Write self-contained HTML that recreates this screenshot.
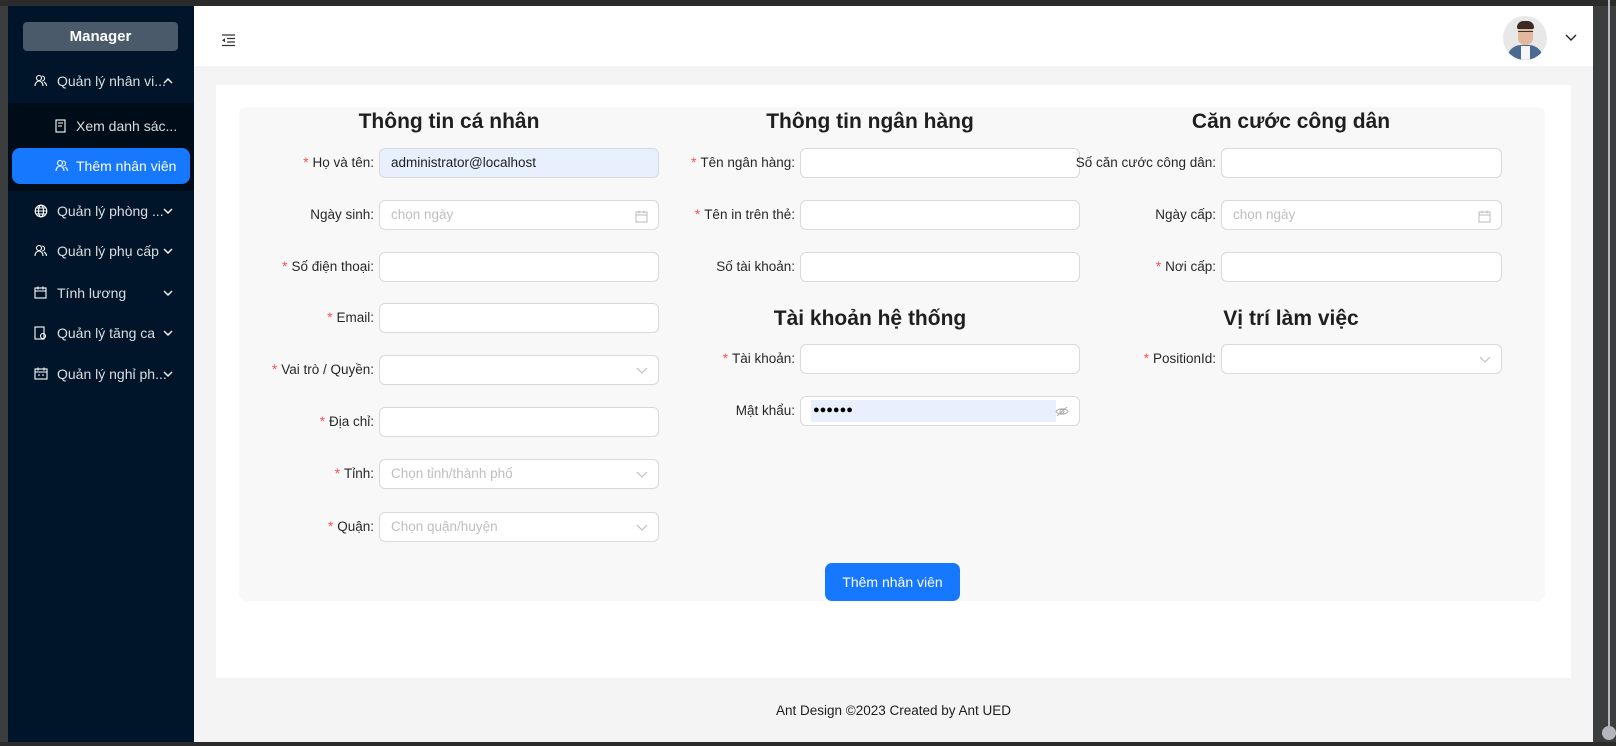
<!DOCTYPE html>
<html><head><meta charset="utf-8"><style>
*{box-sizing:border-box;margin:0;padding:0}
body{width:1616px;height:746px;background:#3c3d3f;position:relative;overflow:hidden;font-family:"Liberation Sans","DejaVu Sans",sans-serif;font-size:14px;color:rgba(0,0,0,.88)}
.a{position:absolute}
#side{left:8px;top:6px;width:186px;height:736px;background:#001529}
#main{left:194px;top:6px;width:1399px;height:736px;background:#f4f4f4}
.mi{position:absolute;left:0;width:186px;height:36px;color:rgba(255,255,255,.85);font-size:14px;line-height:36px}
.mi svg{position:absolute;left:26px;top:11px}
.mi .t{position:absolute;left:49px}
.mi svg.c{left:155px;top:15px}
.lab{position:absolute;text-align:right;font-size:13.5px;line-height:30px;color:rgba(0,0,0,.85)}
.lab b{color:#ff4d4f;font-weight:normal;margin-right:4px}
.in{position:absolute;height:30px;background:#fff;border:1px solid #d9d9d9;border-radius:6px;font-size:13.5px;line-height:28px;padding-left:11px;color:#bfbfbf}
.h{position:absolute;font-size:21px;font-weight:bold;color:rgba(0,0,0,.88);transform:translateX(-50%);white-space:nowrap}
.chev{position:absolute;right:10px;top:9px}
</style></head><body>
<div class="a" style="left:0;top:0;width:1616px;height:6px;background:#2b2b2b"></div>
<div class="a" id="side">
 <div class="a" style="left:15px;top:16px;width:155px;height:29px;background:#4a5a6b;border-radius:4px;color:#fff;font-weight:bold;font-size:15px;text-align:center;line-height:29px">Manager</div>
 <div class="mi" style="top:57px"><svg width="14" height="14" viewBox="0 0 14 14" fill="none" stroke="#fff" stroke-width="1.1"><circle cx="5" cy="4" r="2.5"/><path d="M1 12c0-3 2-5 4-5s4 2 4 5M8 2a2.5 2.5 0 010 5M10 8c1.5 1 2.5 2.5 2.5 4"/></svg><span class="t">Quản lý nhân vi...</span><svg class="c" width="10" height="6" viewBox="0 0 10 6" fill="none" stroke="#fff" stroke-width="1.4"><path d="M1 5l4-4 4 4"/></svg></div>
 <div class="a" style="left:0;top:97px;width:186px;height:88px;background:#000c17"></div>
 <div class="mi" style="top:102px"><svg style="left:47px" width="13" height="14" viewBox="0 0 13 14" fill="none" stroke="#fff" stroke-width="1.1"><rect x="1" y="1" width="9" height="12"/><path d="M3 4h5M3 7h4"/></svg><span class="t" style="left:68px">Xem danh sác...</span></div>
 <div class="a" style="left:4px;top:142px;width:178px;height:36px;background:#1677ff;border-radius:8px"></div>
 <div class="mi" style="top:142px;color:#fff"><svg style="left:47px" width="14" height="14" viewBox="0 0 14 14" fill="none" stroke="#fff" stroke-width="1.1"><circle cx="5" cy="4" r="2.5"/><path d="M1 12c0-3 2-5 4-5s4 2 4 5M8 2a2.5 2.5 0 010 5M10 8c1.5 1 2.5 2.5 2.5 4"/></svg><span class="t" style="left:68px">Thêm nhân viên</span></div>
 <div class="mi" style="top:187px"><svg width="14" height="14" viewBox="0 0 14 14" fill="none" stroke="#fff" stroke-width="1.1"><circle cx="7" cy="7" r="5.8"/><ellipse cx="7" cy="7" rx="2.5" ry="5.8"/><path d="M1.2 7h11.6M2 4h10M2 10h10"/></svg><span class="t">Quản lý phòng ...</span><svg class="c" width="10" height="6" viewBox="0 0 10 6" fill="none" stroke="#fff" stroke-width="1.4"><path d="M1 1l4 4 4-4"/></svg></div>
 <div class="mi" style="top:227px"><svg width="14" height="14" viewBox="0 0 14 14" fill="none" stroke="#fff" stroke-width="1.1"><circle cx="5" cy="4" r="2.5"/><path d="M1 12c0-3 2-5 4-5s4 2 4 5M8 2a2.5 2.5 0 010 5M10 8c1.5 1 2.5 2.5 2.5 4"/></svg><span class="t">Quản lý phụ cấp</span><svg class="c" width="10" height="6" viewBox="0 0 10 6" fill="none" stroke="#fff" stroke-width="1.4"><path d="M1 1l4 4 4-4"/></svg></div>
 <div class="mi" style="top:269px"><svg width="13" height="13" viewBox="0 0 13 13" fill="none" stroke="#fff" stroke-width="1.1"><rect x="1" y="2" width="11" height="10"/><path d="M1 5h11M4 0.5v3M9 0.5v3"/></svg><span class="t">Tính lương</span><svg class="c" width="10" height="6" viewBox="0 0 10 6" fill="none" stroke="#fff" stroke-width="1.4"><path d="M1 1l4 4 4-4"/></svg></div>
 <div class="mi" style="top:309px"><svg width="13" height="14" viewBox="0 0 13 14" fill="none" stroke="#fff" stroke-width="1.1"><rect x="1" y="1" width="9" height="12"/><circle cx="9" cy="10" r="2.5"/></svg><span class="t">Quản lý tăng ca</span><svg class="c" width="10" height="6" viewBox="0 0 10 6" fill="none" stroke="#fff" stroke-width="1.4"><path d="M1 1l4 4 4-4"/></svg></div>
 <div class="mi" style="top:350px"><svg width="14" height="13" viewBox="0 0 14 13" fill="none" stroke="#fff" stroke-width="1.1"><rect x="1" y="2" width="12" height="10"/><path d="M1 5h12M4 0.5v3M10 0.5v3M4 8h2M8 8h2"/></svg><span class="t">Quản lý nghỉ ph...</span><svg class="c" width="10" height="6" viewBox="0 0 10 6" fill="none" stroke="#fff" stroke-width="1.4"><path d="M1 1l4 4 4-4"/></svg></div>
</div>
<div class="a" id="main">
 <div class="a" style="left:0;top:0;width:1399px;height:60px;background:#fff"></div>
 <svg class="a" style="left:27px;top:28px" width="16" height="13" viewBox="0 0 16 13" stroke="#333" stroke-width="1.3"><path d="M1 1h13M6 4.5h8M6 8h8M1 11.5h13"/><path d="M1 6.3l3-2v4z" fill="#333" stroke="none"/></svg>
 <div class="a" style="left:1309px;top:10px;width:44px;height:44px;border-radius:50%;background:#e8e8e8;overflow:hidden">
  <div class="a" style="left:4px;top:29px;width:36px;height:20px;border-radius:14px 14px 0 0;background:#4a6a92"></div>
  <div class="a" style="left:18px;top:30px;width:9px;height:14px;background:#f5f5f5"></div>
  <div class="a" style="left:15px;top:9px;width:15px;height:20px;border-radius:7px;background:#e3b89e"></div>
  <div class="a" style="left:15px;top:15px;width:15px;height:3px;border-top:1.5px solid #333"></div>
  <div class="a" style="left:14px;top:5px;width:17px;height:8px;border-radius:8px 8px 2px 2px;background:#3a2a22"></div>
 </div>
 <svg class="a" style="left:1371px;top:28px" width="12" height="8" viewBox="0 0 12 8" fill="none" stroke="#222" stroke-width="1.4"><path d="M1 1l5 5 5-5"/></svg>
 <div class="a" style="left:22px;top:79px;width:1355px;height:593px;background:#fff"></div>
 <div class="a" style="left:45px;top:101px;width:1306px;height:494px;background:#f8f8f8;border-radius:8px"></div>
 <div class="a" style="left:0;top:697px;width:1399px;text-align:center;font-size:13.5px;color:rgba(0,0,0,.88)">Ant Design ©2023 Created by Ant UED</div>
 <div class="a" style="left:631px;top:557px;width:135px;height:38px;background:#1677ff;border-radius:7px;color:#fff;text-align:center;line-height:38px;font-size:14px">Thêm nhân viên</div>
</div>
<div class="a" style="left:0;top:742px;width:1616px;height:4px;background:#2b2b2b"></div>
<div class="a" style="left:1608px;top:0;width:2px;height:735px;background:#b3b6bc"></div>
<div class="a" style="left:1602px;top:726px;width:14px;height:14px;border-radius:50%;background:#b3b6bc"></div>

<div class="h" style="left:449px;top:110px">Thông tin cá nhân</div>
<div class="h" style="left:870px;top:110px">Thông tin ngân hàng</div>
<div class="h" style="left:1291px;top:110px">Căn cước công dân</div>
<div class="h" style="left:870px;top:307px">Tài khoản hệ thống</div>
<div class="h" style="left:1291px;top:307px">Vị trí làm việc</div>

<div class="lab" style="left:200px;width:174px;top:148px"><b>*</b>Họ và tên:</div>
<div class="in" style="left:379px;top:148px;width:280px;background:#e8f0fe;color:rgba(0,0,0,.88)">administrator@localhost</div>
<div class="lab" style="left:200px;width:174px;top:200px">Ngày sinh:</div>
<div class="in" style="left:379px;top:200px;width:280px">chọn ngày<svg class="chev" width="13" height="13" viewBox="0 0 13 13" fill="none" stroke="#bbb"><rect x="1" y="2" width="11" height="10"/><path d="M1 5h11M4 .5v3M9 .5v3"/></svg></div>
<div class="lab" style="left:200px;width:174px;top:252px"><b>*</b>Số điện thoại:</div>
<div class="in" style="left:379px;top:252px;width:280px"></div>
<div class="lab" style="left:200px;width:174px;top:303px"><b>*</b>Email:</div>
<div class="in" style="left:379px;top:303px;width:280px"></div>
<div class="lab" style="left:200px;width:174px;top:355px"><b>*</b>Vai trò / Quyền:</div>
<div class="in" style="left:379px;top:355px;width:280px"><svg class="chev" style="top:11px" width="12" height="7" viewBox="0 0 12 7" fill="none" stroke="#bbb"><path d="M1 1l5 5 5-5"/></svg></div>
<div class="lab" style="left:200px;width:174px;top:407px"><b>*</b>Địa chỉ:</div>
<div class="in" style="left:379px;top:407px;width:280px"></div>
<div class="lab" style="left:200px;width:174px;top:459px"><b>*</b>Tỉnh:</div>
<div class="in" style="left:379px;top:459px;width:280px">Chọn tỉnh/thành phố<svg class="chev" style="top:11px" width="12" height="7" viewBox="0 0 12 7" fill="none" stroke="#bbb"><path d="M1 1l5 5 5-5"/></svg></div>
<div class="lab" style="left:200px;width:174px;top:512px"><b>*</b>Quận:</div>
<div class="in" style="left:379px;top:512px;width:280px">Chọn quận/huyện<svg class="chev" style="top:11px" width="12" height="7" viewBox="0 0 12 7" fill="none" stroke="#bbb"><path d="M1 1l5 5 5-5"/></svg></div>

<div class="lab" style="left:640px;width:155px;top:148px"><b>*</b>Tên ngân hàng:</div>
<div class="in" style="left:800px;top:148px;width:280px"></div>
<div class="lab" style="left:640px;width:155px;top:200px"><b>*</b>Tên in trên thẻ:</div>
<div class="in" style="left:800px;top:200px;width:280px"></div>
<div class="lab" style="left:640px;width:155px;top:252px">Số tài khoản:</div>
<div class="in" style="left:800px;top:252px;width:280px"></div>
<div class="lab" style="left:640px;width:155px;top:344px"><b>*</b>Tài khoản:</div>
<div class="in" style="left:800px;top:344px;width:280px"></div>
<div class="lab" style="left:640px;width:155px;top:396px">Mật khẩu:</div>
<div class="in" style="left:800px;top:396px;width:280px;padding:3px 0 0 10px"><div style="width:245px;height:22px;background:#e8f0fe;color:#000;line-height:20px;font-size:11px;padding-left:2px">●●●●●●</div><svg class="chev" style="top:9px" width="14" height="11" viewBox="0 0 14 11" fill="none" stroke="#aaa"><path d="M1 5.5C3 2 11 2 13 5.5 11 9 3 9 1 5.5z"/><circle cx="7" cy="5.5" r="2"/><path d="M2 10L12 1"/></svg></div>

<div class="lab" style="left:1050px;width:166px;top:148px">Số căn cước công dân:</div>
<div class="in" style="left:1221px;top:148px;width:281px"></div>
<div class="lab" style="left:1060px;width:156px;top:200px">Ngày cấp:</div>
<div class="in" style="left:1221px;top:200px;width:281px">chọn ngày<svg class="chev" width="13" height="13" viewBox="0 0 13 13" fill="none" stroke="#bbb"><rect x="1" y="2" width="11" height="10"/><path d="M1 5h11M4 .5v3M9 .5v3"/></svg></div>
<div class="lab" style="left:1060px;width:156px;top:252px"><b>*</b>Nơi cấp:</div>
<div class="in" style="left:1221px;top:252px;width:281px"></div>
<div class="lab" style="left:1060px;width:156px;top:344px"><b>*</b>PositionId:</div>
<div class="in" style="left:1221px;top:344px;width:281px"><svg class="chev" style="top:11px" width="12" height="7" viewBox="0 0 12 7" fill="none" stroke="#bbb"><path d="M1 1l5 5 5-5"/></svg></div>
</body></html>
